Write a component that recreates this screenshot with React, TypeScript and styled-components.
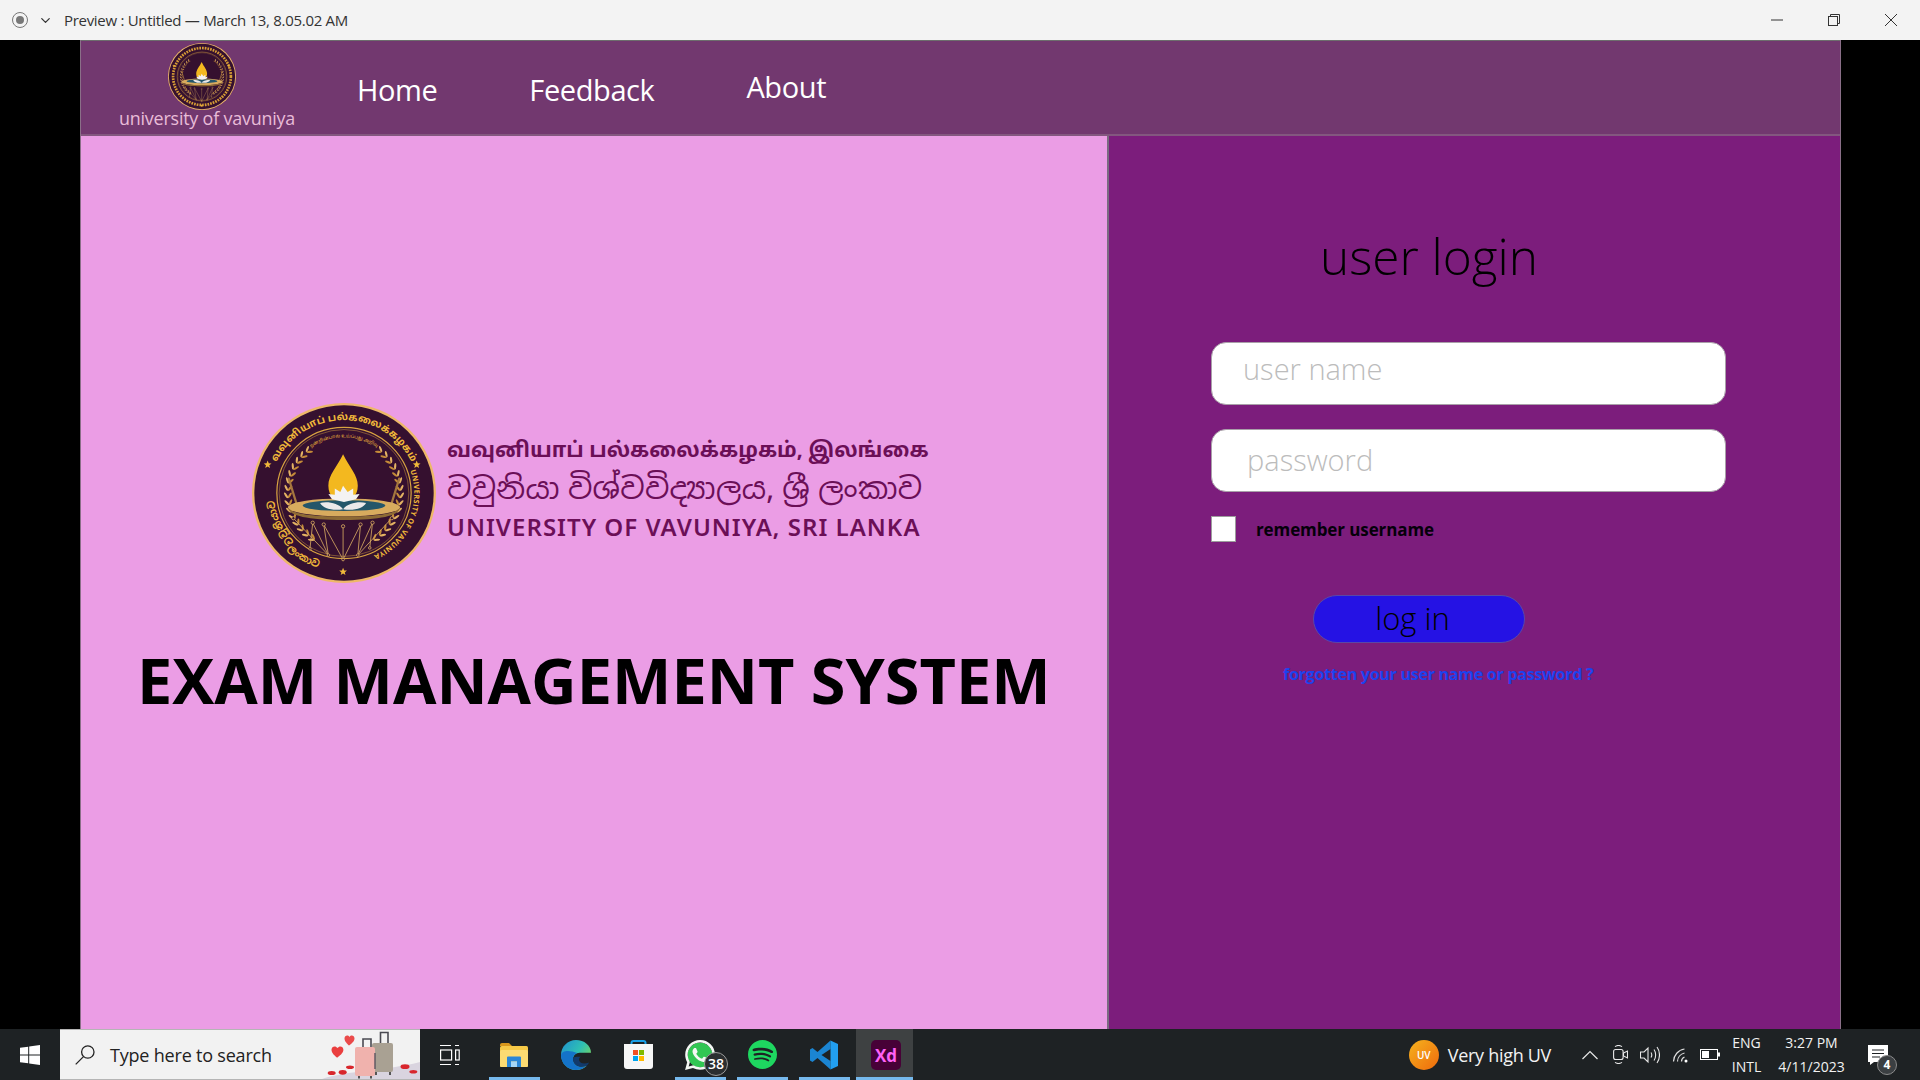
import React, { useId } from "react";
import styled, { createGlobalStyle } from "styled-components";
import { SiSpotify, SiWhatsapp } from "react-icons/si";
import { FiChevronDown } from "react-icons/fi";

const GlobalStyle = createGlobalStyle`
  html, body {
    margin: 0;
    padding: 0;
    background: #000;
    font-family: "Open Sans", "Noto Sans", sans-serif;
  }
  * { box-sizing: border-box; }
`;

const Screen = styled.div`
  width: 1920px;
  height: 1080px;
  display: flex;
  flex-direction: column;
  overflow: hidden;
`;

/* preview window title bar */
const TitleBar = styled.div`
  height: 40px;
  flex: none;
  display: flex;
  align-items: center;
  background: #f3f3f3;
  color: #333;
  font-size: 15px;
`;
const RecordDot = styled.span`
  width: 16px;
  height: 16px;
  margin-left: 12px;
  border: 1px solid #777;
  border-radius: 50%;
  display: flex;
  align-items: center;
  justify-content: center;
  &::after {
    content: "";
    width: 8px;
    height: 8px;
    border-radius: 50%;
    background: #777;
  }
`;
const TitleChevron = styled.span`
  display: flex;
  margin: 0 11px 0 10px;
  color: #333;
  font-size: 15px;
`;
const TitleText = styled.span`
  letter-spacing: -0.3px;
`;
const WindowButtons = styled.div`
  margin: 0 1px 0 auto;
  display: flex;
`;
const WindowButton = styled.span`
  width: 57px;
  height: 40px;
  display: flex;
  align-items: center;
  justify-content: center;
`;

const Stage = styled.div`
  flex: 1;
  padding: 0 79px 0 80px;
  background: #000;
  min-height: 0;
`;
const Page = styled.div`
  height: 100%;
  display: flex;
  flex-direction: column;
  border-left: 1px solid #8a6f88;
  border-right: 1px solid #8a6f88;
`;

/* app nav */
const NavBar = styled.nav`
  height: 96px;
  flex: none;
  display: flex;
  align-items: flex-end;
  background: #72386f;
  border-top: 1px solid #6d6d6d;
  border-bottom: 2px solid #83577f;
`;
const NavBrand = styled.div`
  width: 215px;
  margin-left: 38px;
  display: flex;
  flex-direction: column;
`;
const NavSeal = styled.div`
  width: 68px;
  height: 67px;
  margin-left: 49px;
`;
const NavCaption = styled.div`
  margin: -3px 0 5px;
  color: #e9bcd8;
  font-size: 17.9px;
  line-height: 22px;
  letter-spacing: -0.2px;
  white-space: nowrap;
`;
const NavLink = styled.a<{ $gap: number; $lift?: number }>`
  margin-left: ${(p) => p.$gap}px;
  margin-bottom: ${(p) => 24 + (p.$lift || 0)}px;
  color: #fff;
  font-size: 29px;
  line-height: 40px;
  letter-spacing: -0.4px;
`;

const Columns = styled.main`
  flex: 1;
  min-height: 0;
  display: grid;
  grid-template-columns: 1028px 1fr;
`;
const LeftPanel = styled.section`
  background: #eb9de5;
  border-right: 2px solid #7a6a80;
  padding: 267px 0 0 56px;
`;
const BrandRow = styled.div`
  display: flex;
  align-items: flex-start;
  margin-left: 115px;
`;
const BigSeal = styled.div`
  width: 184px;
  height: 180px;
  flex: none;
`;
const Wordmark = styled.div`
  margin: 30px 0 0 11px;
  color: #6b0f57;
  display: flex;
  flex-direction: column;
  white-space: nowrap;
`;
const WordLine = styled.div<{ $size: number; $weight: number; $spacing?: number }>`
  height: 39px;
  line-height: 39px;
  font-size: ${(p) => p.$size}px;
  font-weight: ${(p) => p.$weight};
  letter-spacing: ${(p) => p.$spacing || 0}px;
  font-family: "Noto Sans Tamil", "Noto Sans Sinhala", "Noto Sans", "DejaVu Sans", sans-serif;
`;
const Heading = styled.h1`
  margin: 54px 0 0;
  color: #000;
  font-size: 63px;
  line-height: 85px;
  font-weight: 700;
  white-space: nowrap;
`;

const RightPanel = styled.section`
  background: #7c1d7c;
  padding: 85px 0 0 102px;
`;
const LoginTitle = styled.h2`
  margin: 0 0 0 109px;
  color: #000;
  font-size: 49.5px;
  line-height: 70px;
  font-weight: 350;
  white-space: nowrap;
`;
const Fields = styled.div`
  margin-top: 51px;
`;
const Field = styled.input<{ $inset: number; $under: number }>`
  display: block;
  width: 515px;
  height: 63px;
  margin-bottom: 24px;
  padding: 0 0 ${(p) => p.$under}px ${(p) => p.$inset}px;
  background: #fff;
  border: 1px solid #a9a0a9;
  border-radius: 15px;
  font-family: inherit;
  font-size: 29px;
  font-weight: 300;
  outline: none;
  &::placeholder {
    color: #bcbcbc;
    opacity: 1;
  }
`;
const RememberRow = styled.label`
  display: flex;
  align-items: center;
  margin-top: 1px;
  color: #05000a;
  font-size: 17px;
  font-weight: 700;
  letter-spacing: -0.1px;
`;
const RememberBox = styled.input`
  appearance: none;
  width: 25px;
  height: 26px;
  margin: 0 20px 0 0;
  background: #fff;
  border: 1px solid #9d9d9d;
`;
const LoginButton = styled.button`
  display: block;
  width: 212px;
  height: 48px;
  margin: 53px 0 0 102px;
  padding: 0 13px 3px 0;
  background: #2512e4;
  border: 1px solid #5a46a8;
  border-radius: 24px;
  color: #000;
  font-family: inherit;
  font-size: 31px;
  font-weight: 350;
`;
const ForgotLink = styled.a`
  display: block;
  margin: 18px 0 0 72px;
  color: #1c42ee;
  font-size: 16.1px;
  line-height: 26px;
  font-weight: 700;
  letter-spacing: -0.3px;
  white-space: nowrap;
`;

/* windows taskbar */
const TaskBar = styled.footer`
  height: 51px;
  flex: none;
  display: flex;
  align-items: stretch;
  background: #1e2224;
  color: #f2f2f2;
`;
const StartButton = styled.div`
  width: 60px;
  display: flex;
  align-items: center;
  justify-content: center;
`;
const SearchBox = styled.div`
  width: 360px;
  display: flex;
  align-items: center;
  gap: 15px;
  padding-left: 15px;
  background: #f2f2f2;
  border-top: 1px solid #b5b5b5;
  border-bottom: 1px solid #b5b5b5;
  color: #222;
  font-size: 18px;
  letter-spacing: -0.2px;
  position: relative;
`;
const SearchArt = styled.svg`
  position: absolute;
  right: 0;
  top: -1px;
`;
const TaskSlot = styled.div<{ $open?: boolean }>`
  width: 62px;
  display: flex;
  align-items: center;
  justify-content: center;
  position: relative;
  &::after {
    content: "";
    display: ${(p) => (p.$open ? "block" : "none")};
    position: absolute;
    bottom: 0;
    left: 6px;
    right: 5px;
    height: 3px;
    background: #76b9ed;
  }
`;
const TaskViewSlot = styled(TaskSlot)`
  width: 63px;
  padding-right: 3px;
`;
const FocusedSlot = styled(TaskSlot)`
  width: 57px;
  margin-left: 1px;
  padding-left: 2px;
  background: #3e4142;
  &::after {
    left: 0;
    right: 0;
  }
`;
const WhatsappMark = styled.span`
  width: 30px;
  height: 30px;
  display: flex;
  color: #f4f8f4;
  background: radial-gradient(circle at 50% 50%, #31c653 0 12px, transparent 12.5px);
`;
const CountBadge = styled.span`
  position: absolute;
  left: 35px;
  top: 23px;
  width: 24px;
  height: 24px;
  border-radius: 50%;
  background: #2b2e30;
  border: 1px solid #9a9a9a;
  color: #fff;
  font-size: 14px;
  font-weight: 600;
  line-height: 22px;
  text-align: center;
`;
const Tray = styled.div`
  margin-left: auto;
  display: flex;
  align-items: center;
`;
const UvCircle = styled.span`
  width: 30px;
  height: 30px;
  border-radius: 50%;
  background: linear-gradient(135deg, #f5b21e, #ef6a0c);
  color: #fff;
  font-size: 10px;
  font-weight: 600;
  display: flex;
  align-items: center;
  justify-content: center;
`;
const UvLabel = styled.span`
  margin: 0 24px 0 9px;
  font-size: 18px;
  white-space: nowrap;
  letter-spacing: -0.3px;
`;
const TrayIcon = styled.span<{ $width: number }>`
  width: ${(p) => p.$width}px;
  display: flex;
  justify-content: center;
  align-items: center;
`;
const TrayText = styled.div<{ $width: number }>`
  width: ${(p) => p.$width}px;
  text-align: center;
  font-size: 14px;
  line-height: 24px;
  white-space: nowrap;
`;
const NoteSlot = styled.div`
  width: 66px;
  padding-left: 14px;
  align-self: stretch;
  display: flex;
  align-items: center;
  position: relative;
`;
const NoteBadge = styled.span`
  position: absolute;
  left: 23px;
  top: 26px;
  width: 20px;
  height: 20px;
  border-radius: 50%;
  background: #3b3f42;
  border: 1px solid #8b8b8b;
  color: #fff;
  font-size: 12px;
  font-weight: 700;
  line-height: 18px;
  text-align: center;
`;

const gold = "#d9a441";

function Wheat({ flip }: { flip?: boolean }) {
  const grains = Array.from({ length: 15 }, (_, i) => {
    const deg = 128 + i * 7.6;
    const a = deg * (Math.PI / 180);
    return {
      x: 100 + 61 * Math.cos(a),
      y: 100 - 61 * Math.sin(a),
      tangent: -deg - 90,
    };
  });
  return (
    <g transform={flip ? "translate(200 0) scale(-1 1)" : undefined}>
      {grains.map((g, i) => (
        <g key={i} transform={`translate(${g.x} ${g.y}) rotate(${g.tangent})`}>
          <ellipse cx="0" cy="-2.4" rx="3.6" ry="1.2" fill="#c48a38" transform="rotate(32)" />
          <ellipse cx="0" cy="2.4" rx="3.6" ry="1.2" fill="#e3b263" transform="rotate(-32)" />
        </g>
      ))}
    </g>
  );
}

const STAR = "M14 60l1.2 3 3 .2-2.4 2 .8 3-2.6-1.7-2.6 1.7.8-3-2.4-2 3-.2z";
const LEG_TOPS: [number, number][] = [[45, 128], [66, 133], [78, 135], [99, 137], [118, 135], [131, 133], [152, 128]];
const LEG_BOTTOMS: [number, number][] = [[63, 162], [83, 169], [99, 174], [115, 169], [128, 161]];
const LEG_LINKS: [number, number][] = [[0, 1], [1, 0], [1, 1], [2, 1], [2, 2], [3, 2], [4, 2], [4, 3], [5, 3], [5, 4], [6, 3]];

// the nav copy is too small for the ring lettering, so it gets a dotted ring instead
function Seal({ compact }: { compact?: boolean }) {
  const id = useId().replace(/[^a-zA-Z0-9]/g, "");
  return (
    <svg width="100%" height="100%" viewBox="0 0 200 200" preserveAspectRatio="none">
      <defs>
        <path id={`${id}top`} d="M21.8 79 A81 81 0 0 1 178.2 79" />
        <path id={`${id}right`} d="M172 75 A76 76 0 0 1 125 172" />
        <path id={`${id}left`} d="M46 154 A76 76 0 0 1 25 87" />
        <path id={`${id}bottom`} d="M38 162 A88 88 0 0 0 77 185" />
        <path id={`${id}motto`} d="M46.3 69 A62 62 0 0 1 153.7 69" />
      </defs>
      <circle cx="100" cy="100" r="100" fill="#eeb868" />
      <circle cx="100" cy="100" r="97.5" fill="#35102f" />
      <circle cx="100" cy="100" r="73" fill="none" stroke={gold} strokeWidth="1.3" />
      <circle cx="100" cy="100" r="70.5" fill="none" stroke={gold} strokeWidth="0.5" />
      {compact ? (
        <circle cx="100" cy="100" r="85" fill="none" stroke="#d69c35" strokeWidth="8" strokeDasharray="5 3" />
      ) : (
        <>
          <text fontSize="11" fontWeight="700" fill="#f1b93a" textAnchor="middle" fontFamily="'Noto Sans Tamil','Noto Sans',sans-serif">
            <textPath href={`#${id}top`} startOffset="50%">வவுனியாப் பல்கலைக்கழகம்</textPath>
          </text>
          <text fontSize="8" fontWeight="700" fill="#f1b93a" letterSpacing="0.4" fontFamily="'Open Sans',sans-serif">
            <textPath href={`#${id}right`}>UNIVERSITY OF VAVUNIYA</textPath>
          </text>
          <text fontSize="11" fontWeight="700" fill="#f1b93a" fontFamily="'Noto Sans Sinhala','Noto Sans',sans-serif">
            <textPath href={`#${id}left`}>වවුනියාව</textPath>
          </text>
          <text fontSize="11" fontWeight="700" fill="#f1b93a" fontFamily="'Noto Sans Sinhala','Noto Sans',sans-serif">
            <textPath href={`#${id}bottom`}>ලංකාව</textPath>
          </text>
          <text fontSize="5" fill="#f1b93a" textAnchor="middle" fontFamily="'Noto Sans Tamil','Noto Sans',sans-serif">
            <textPath href={`#${id}motto`} startOffset="50%">நன்றின்பால் உய்ப்பது அறிவு</textPath>
          </text>
        </>
      )}
      <path d={STAR} fill="#f1b93a" transform="translate(3 4)" />
      <path d={STAR} fill="#f1b93a" transform="translate(165 4)" />
      <path d={STAR} fill="#f1b93a" transform="translate(85 123)" />
      <Wheat />
      <Wheat flip />
      <path d="M99 57C92 72 83 80 83 92c0 12 8 17 16 17s16-5 16-17c0-12-9-20-16-35z" fill="#f3b81f" />
      <path d="M40 84l9 30M160 84l-9 30" stroke="#a4763f" strokeWidth="2.4" strokeLinecap="round" />
      <ellipse cx="100" cy="116" rx="61" ry="10" fill="#d8ab5e" />
      <path d="M39 116c1 9 20 14 61 14s60-5 61-14c-4 7-24 10-61 10s-57-3-61-10z" fill="#8d6a35" />
      <ellipse cx="100" cy="114" rx="45" ry="6" fill="#24566a" />
      <path d="M99 92l5 7 6-4 0 7 7-1-4 6-13 3-13-3-4-6 7 1 0-7 6 4z" fill="#f4f2f2" />
      <path d="M99 118c-5-7-17-9-25-7 3 6 13 9 25 7zm0 0c5-7 17-9 25-7-3 6-13 9-25 7z" fill="#ece9ea" />
      <g stroke="#d9ac62" strokeWidth="0.9" fill="none">
        {LEG_LINKS.map(([t, b]) => (
          <line key={`${t}-${b}`} x1={LEG_TOPS[t][0]} y1={LEG_TOPS[t][1]} x2={LEG_BOTTOMS[b][0]} y2={LEG_BOTTOMS[b][1]} />
        ))}
        {LEG_TOPS.map(([x, y]) => (
          <circle key={x} cx={x} cy={y} r="1.8" fill="#35102f" />
        ))}
        {LEG_BOTTOMS.map(([x, y]) => (
          <circle key={x} cx={x} cy={y} r="1.4" fill="#35102f" />
        ))}
      </g>
    </svg>
  );
}

const WinLogo = () => (
  <svg width="20" height="20" viewBox="0 0 20 20" fill="#fff">
    <path d="M0 2.8 8.2 1.7v7.8H0zM9.2 1.5 20 0v9.5H9.2zM0 10.5h8.2v7.8L0 17.2zM9.2 10.5H20V20L9.2 18.5z" />
  </svg>
);
const LensIcon = () => (
  <svg width="20" height="20" viewBox="0 0 20 20" fill="none" stroke="#222" strokeWidth="1.3">
    <circle cx="12.8" cy="7" r="6.2" />
    <path d="M8.5 11.6.7 19.4" />
  </svg>
);
const TaskViewIcon = () => (
  <svg width="20" height="22" viewBox="0 0 20 22" fill="none" stroke="#fff" strokeWidth="1.2">
    <path d="M0 1.5h11M0 20.5h11M15 1.5h4M15 20.5h4" />
    <rect x=".6" y="6" width="11" height="10" />
    <rect x="15.6" y="6" width="3.6" height="10" />
  </svg>
);
const ExplorerIcon = () => (
  <svg width="28" height="24" viewBox="0 0 28 24">
    <path d="M0 2a2 2 0 0 1 2-2h7l3 3h-12z" fill="#d8971c" />
    <rect y="3" width="28" height="21" rx="1.5" fill="#f6c947" />
    <rect y="7" width="28" height="17" rx="1.5" fill="#fcdb72" />
    <path d="M7 24v-9.5a1 1 0 0 1 1-1h12a1 1 0 0 1 1 1V24h-4v-5.5h-6V24z" fill="#2a86d6" />
    <rect x="11" y="18.5" width="6" height="5.5" fill="#a6d6f5" />
  </svg>
);
const EdgeIcon = () => (
  <svg width="30" height="30" viewBox="0 0 30 30">
    <defs>
      <linearGradient id="edgeTop" x1="0" y1="0" x2="1" y2=".7">
        <stop offset="0" stopColor="#1f8fd0" />
        <stop offset=".55" stopColor="#2ebfb4" />
        <stop offset="1" stopColor="#7ed957" />
      </linearGradient>
    </defs>
    <path d="M15 0C6.7 0 0 6.7 0 15c0 8.3 6.7 15 15 15 4.2 0 8-1.6 10.7-4.3-7 3-13.2-.5-13.7-6-.4-4 3-7.2 7-7h11C30 5.5 23.2 0 15 0z" fill="url(#edgeTop)" />
    <path d="M0 15c0 8.3 6.7 15 15 15 4.2 0 8-1.6 10.7-4.3-7 3-13.2-.5-13.7-6-.3-3 1.4-5.7 4.2-6.7C9 10 1 10 0 15z" fill="#1473c9" />
    <path d="M12 19.7c.5 5.5 6.7 9 13.7 6 .9-.9 1.8-2 2.4-3.1-5 1.7-9.1 1-10-2.4-.4-1.7.4-3.2 1.9-3.5h-1.5c-3.8-.2-6.9 0-6.5 3z" fill="#123a6b" />
  </svg>
);
const StoreIcon = () => (
  <svg width="29" height="29" viewBox="0 0 29 29">
    <path d="M7.5 7V3a2 2 0 0 1 2-2h10a2 2 0 0 1 2 2v4" fill="none" stroke="#1aa0e8" strokeWidth="2" />
    <path d="M0 4h29v22a3 3 0 0 1-3 3H3a3 3 0 0 1-3-3z" fill="#f7f7f7" />
    <rect x="9" y="10" width="5" height="5" fill="#f25022" />
    <rect x="15" y="10" width="5" height="5" fill="#7fba00" />
    <rect x="9" y="16" width="5" height="5" fill="#00a4ef" />
    <rect x="15" y="16" width="5" height="5" fill="#ffb900" />
  </svg>
);
const CodeIcon = () => (
  <svg width="30" height="30" viewBox="0 0 30 30">
    <path d="M21.5.5 8.5 12 3.500 8 1 9.500v11L3.500 22l5-4 13 11.500V21L12.500 15l9-6z" fill="#1b85d2" />
    <path d="M21.5.5 29 4v22l-7.500 3.500z" fill="#229ff0" />
  </svg>
);
const XdIcon = () => (
  <svg width="30" height="30" viewBox="0 0 30 30">
    <rect width="30" height="30" rx="5" fill="#470137" />
    <text x="15" y="22" textAnchor="middle" fontSize="17" fontWeight="700" fill="#ff61f6" fontFamily="'Open Sans',sans-serif">Xd</text>
  </svg>
);
const TripArt = () => (
  <SearchArt width="100" height="50" viewBox="0 0 100 50">
    <path d="M2 50C25 42 70 41 100 33v17z" fill="#d9d4df" />
    <path d="M60.5 14V3.5h7.5V14" stroke="#4a4a52" strokeWidth="1.6" fill="none" />
    <rect x="52" y="14" width="21" height="29" rx="2" fill="#a9a193" />
    <rect x="55" y="43" width="2" height="3" fill="#555" />
    <rect x="69" y="43" width="2" height="3" fill="#555" />
    <path d="M43 18v-8h8v8" stroke="#4a4a52" strokeWidth="1.6" fill="none" />
    <rect x="35" y="18" width="20" height="29" rx="2" fill="#f0b2ad" />
    <path d="M55 24v16" stroke="#5a5560" strokeWidth="1.4" />
    <rect x="38" y="47" width="2" height="2.5" fill="#555" />
    <rect x="50" y="47" width="2" height="2.5" fill="#555" />
    <path d="M29.5 8c-1.5-2.500-5-1.500-5 1.500 0 3 3 5.500 4.500 7 2-1.500 5.500-4 5.500-7 0-3-3.500-4-5-1.500z" fill="#ea4a4a" />
    <path d="M17.5 19c-1.800-2.800-6-1.800-6 1.700 0 3.400 3.600 6.300 5.600 8 2.200-1.700 6.300-4.600 6.300-8 0-3.500-4-4.500-5.900-1.700z" fill="#ea3f3f" />
    <ellipse cx="11.7" cy="44" rx="4" ry="2" fill="#d8262c" />
    <ellipse cx="22.7" cy="43.3" rx="4" ry="2.4" fill="#d8262c" />
    <ellipse cx="30" cy="38.3" rx="4" ry="1.8" fill="#d8262c" />
    <ellipse cx="85" cy="37.7" rx="4.5" ry="2.4" fill="#d8262c" />
    <ellipse cx="93.3" cy="42.7" rx="4" ry="1.8" fill="#d8262c" />
  </SearchArt>
);
const ChevronUpIcon = () => (
  <svg width="16" height="10" viewBox="0 0 16 10" fill="none" stroke="#e8e8e8" strokeWidth="1.2">
    <path d="M.5 9 8 1.5 15.5 9" />
  </svg>
);
const CameraIcon = () => (
  <svg width="15" height="19" viewBox="0 0 15 19" fill="none" stroke="#e8e8e8" strokeWidth="1.1">
    <rect x=".6" y="4.5" width="9.5" height="10" rx="2" />
    <path d="M10.5 8 14.5 6v7l-4-2zM2 1.6c2-1.3 5-1.3 7 0M2 17.4c2 1.3 5 1.3 7 0" />
  </svg>
);
const SpeakerIcon = () => (
  <svg width="20" height="18" viewBox="0 0 20 18" fill="none" stroke="#e8e8e8" strokeWidth="1.1">
    <path d="M.5 6h3.5l4-4v14l-4-4H.5z" />
    <path d="M11 6.5c1 1.6 1 3.4 0 5M14 3.5c2.2 3 2.2 8 0 11M17 1c3.3 4.4 3.3 11.6 0 16" />
  </svg>
);
const WifiIcon = () => (
  <svg width="16" height="16" viewBox="0 0 16 16" fill="none" stroke="#e0e0e0" strokeWidth="1.2">
    <path d="M9.5 14.5A5 5 0 0 1 12.5 10M5.5 14.5A9 9 0 0 1 12.5 6M1.5 14.5A13 13 0 0 1 12.5 2" />
    <circle cx="14" cy="14" r="1.5" fill="#fff" stroke="none" />
  </svg>
);
const BatteryIcon = () => (
  <svg width="20" height="11" viewBox="0 0 20 11">
    <rect x=".5" y=".5" width="17" height="10" fill="none" stroke="#fff" />
    <rect x="2" y="2" width="7" height="7" fill="#fff" />
    <rect x="18" y="3.5" width="2" height="4" fill="#fff" />
  </svg>
);
const NoteIcon = () => (
  <svg width="20" height="20" viewBox="0 0 20 20">
    <path d="M0 0h20v17H6l-4 3v-3H0z" fill="#fff" />
    <path d="M4 5h12M4 8.5h12M4 12h8" stroke="#1e2224" strokeWidth="1.2" />
  </svg>
);

function App() {
  return (
    <Screen>
      <GlobalStyle />
      <TitleBar>
        <RecordDot />
        <TitleChevron>
          <FiChevronDown />
        </TitleChevron>
        <TitleText>Preview : Untitled — March 13, 8.05.02 AM</TitleText>
        <WindowButtons>
          <WindowButton>
            <svg width="12" height="12" viewBox="0 0 12 12"><path d="M0 6h12" stroke="#333" /></svg>
          </WindowButton>
          <WindowButton>
            <svg width="12" height="12" viewBox="0 0 12 12" fill="none" stroke="#333"><rect x=".5" y="2.5" width="9" height="9" /><path d="M2.5 2.5v-2h9v9h-2" /></svg>
          </WindowButton>
          <WindowButton>
            <svg width="12" height="12" viewBox="0 0 12 12"><path d="M0 0l12 12M12 0L0 12" stroke="#333" /></svg>
          </WindowButton>
        </WindowButtons>
      </TitleBar>

      <Stage>
        <Page>
          <NavBar>
            <NavBrand>
              <NavSeal>
                <Seal compact />
              </NavSeal>
              <NavCaption>university of vavuniya</NavCaption>
            </NavBrand>
            <NavLink $gap={23}>Home</NavLink>
            <NavLink $gap={92}>Feedback</NavLink>
            <NavLink $gap={92} $lift={3}>About</NavLink>
          </NavBar>
          <Columns>
            <LeftPanel>
              <BrandRow>
                <BigSeal>
                  <Seal />
                </BigSeal>
                <Wordmark>
                  <WordLine $size={21} $weight={700}>வவுனியாப் பல்கலைக்கழகம், இலங்கை</WordLine>
                  <WordLine $size={30} $weight={400} $spacing={0.3}>වවුනියා විශ්වවිද්‍යාලය, ශ්‍රී ලංකාව</WordLine>
                  <WordLine $size={24} $weight={600} $spacing={1}>UNIVERSITY OF VAVUNIYA, SRI LANKA</WordLine>
                </Wordmark>
              </BrandRow>
              <Heading>EXAM MANAGEMENT SYSTEM</Heading>
            </LeftPanel>
            <RightPanel>
              <LoginTitle>user login</LoginTitle>
              <Fields>
                <Field $inset={31} $under={11} placeholder="user name" />
                <Field $inset={35} $under={3} placeholder="password" />
              </Fields>
              <RememberRow>
                <RememberBox type="checkbox" />
                remember username
              </RememberRow>
              <LoginButton>log in</LoginButton>
              <ForgotLink>forgotten your user name or password ?</ForgotLink>
            </RightPanel>
          </Columns>
        </Page>
      </Stage>

      <TaskBar>
        <StartButton>
          <WinLogo />
        </StartButton>
        <SearchBox>
          <LensIcon />
          Type here to search
          <TripArt />
        </SearchBox>
        <TaskViewSlot>
          <TaskViewIcon />
        </TaskViewSlot>
        <TaskSlot $open>
          <ExplorerIcon />
        </TaskSlot>
        <TaskSlot>
          <EdgeIcon />
        </TaskSlot>
        <TaskSlot>
          <StoreIcon />
        </TaskSlot>
        <TaskSlot $open>
          <WhatsappMark>
            <SiWhatsapp size={30} />
          </WhatsappMark>
          <CountBadge>38</CountBadge>
        </TaskSlot>
        <TaskSlot $open>
          <SiSpotify size={29} color="#1ed760" />
        </TaskSlot>
        <TaskSlot $open>
          <CodeIcon />
        </TaskSlot>
        <FocusedSlot $open>
          <XdIcon />
        </FocusedSlot>
        <Tray>
          <UvCircle>UV</UvCircle>
          <UvLabel>Very high UV</UvLabel>
          <TrayIcon $width={30}>
            <ChevronUpIcon />
          </TrayIcon>
          <TrayIcon $width={31}>
            <CameraIcon />
          </TrayIcon>
          <TrayIcon $width={28}>
            <SpeakerIcon />
          </TrayIcon>
          <TrayIcon $width={32}>
            <WifiIcon />
          </TrayIcon>
          <TrayIcon $width={28}>
            <BatteryIcon />
          </TrayIcon>
          <TrayText $width={45}>
            <div>ENG</div>
            <div>INTL</div>
          </TrayText>
          <TrayText $width={85}>
            <div>3:27 PM</div>
            <div>4/11/2023</div>
          </TrayText>
          <NoteSlot>
            <NoteIcon />
            <NoteBadge>4</NoteBadge>
          </NoteSlot>
        </Tray>
      </TaskBar>
    </Screen>
  );
}

export default App;
